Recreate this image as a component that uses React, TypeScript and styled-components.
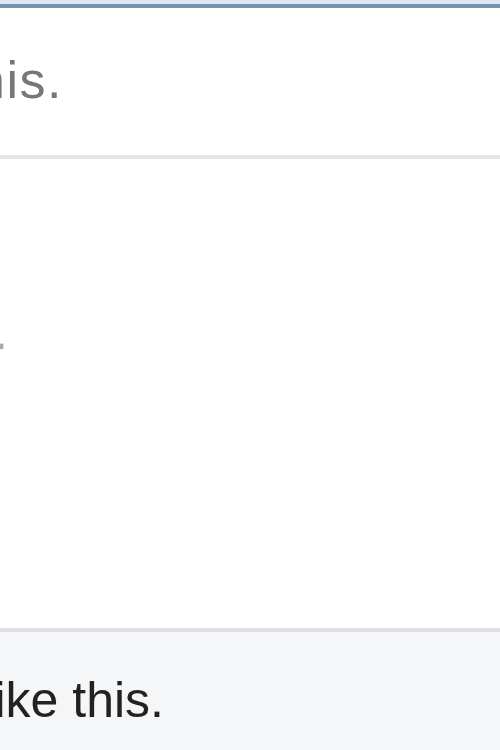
import React from "react";
import styled, { createGlobalStyle } from "styled-components";

const Global = createGlobalStyle`
  html, body { margin: 0; padding: 0; background: #ffffff; overflow: hidden; }
  #root { width: 500px; height: 750px; overflow: hidden; }
`;

const Page = styled.div`
  width: 500px;
  height: 750px;
  display: flex;
  flex-direction: column;
  overflow: hidden;
  font-family: "Liberation Sans", Arial, sans-serif;
`;

const TopEdge = styled.div`
  flex: 0 0 auto;
  height: 0;
  border-top: 4px solid #dde8f6;
  border-bottom: 4px solid #7d92ac;
`;

const Section = styled.div<{ $h: number; $pad: number; $bg?: string }>`
  flex: 0 0 ${(p) => p.$h}px;
  box-sizing: border-box;
  padding-top: ${(p) => p.$pad}px;
  background: ${(p) => p.$bg || "#ffffff"};
  display: flex;
  flex-direction: column;
`;

const Divider = styled.div<{ $color: string }>`
  flex: 0 0 4px;
  background: ${(p) => p.$color};
`;

const TextEnd = styled.div<{ $w: number }>`
  width: ${(p) => p.$w}px;
  display: flex;
  justify-content: flex-end;
`;

const Line = styled.span<{ $color: string; $spacing?: number; $size?: number }>`
  white-space: nowrap;
  font-size: ${(p) => p.$size || 50}px;
  line-height: 1;
  letter-spacing: ${(p) => p.$spacing || 0}px;
  color: ${(p) => p.$color};
`;

export default function App() {
  return (
    <>
      <Global />
      <Page>
        <TopEdge />
        <Section $h={147} $pad={46}>
          <TextEnd $w={63}>
            <Line $color="#777777" $spacing={1.5} $size={52}>Write something like this.</Line>
          </TextEnd>
        </Section>
        <Divider $color="#e4e4e4" />
        <Section $h={469} $pad={148}>
          <TextEnd $w={8}>
            <Line $color="#a8a8a8">Your text goes here.</Line>
          </TextEnd>
        </Section>
        <Divider $color="#dedfe2" />
        <Section $h={118} $pad={43} $bg="#f5f6f8">
          <TextEnd $w={164}>
            <Line $color="#222222">Write something like this.</Line>
          </TextEnd>
        </Section>
      </Page>
    </>
  );
}
